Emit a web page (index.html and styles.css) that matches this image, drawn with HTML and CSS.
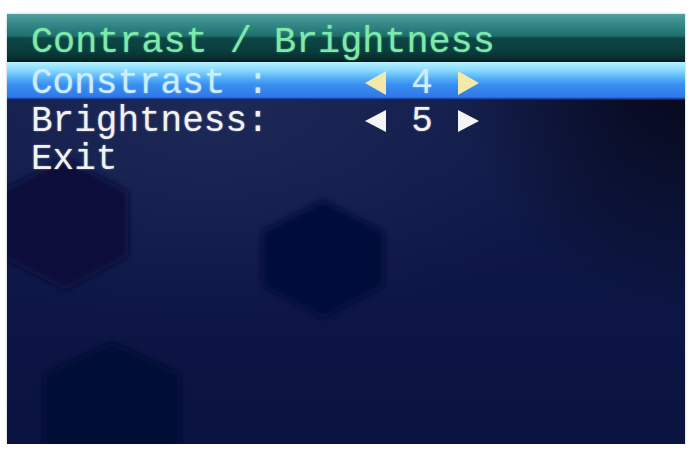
FILE: index.html
```html
<!DOCTYPE html>
<html>
<head>
<meta charset="utf-8">
<link rel="stylesheet" href="styles.css">
</head>
<body>
<div class="screen">
  <svg class="hexes" width="678" height="430" viewBox="0 0 678 430">
    <defs>
      <filter id="soft" x="-20%" y="-20%" width="140%" height="140%">
        <feGaussianBlur stdDeviation="3"/>
      </filter>
    </defs>
    <g filter="url(#soft)" stroke-linejoin="round" stroke-width="14">
      <polygon points="58,152 114,182 114,238 58,268 0,238 0,182" fill="#08113a" stroke="#08113a"/>
      <polygon points="316,194 370,222 370,268 316,296 262,268 262,222" fill="#060e3a" stroke="#060e3a"/>
      <polygon points="105,336 166,364 166,430 44,430 44,364" fill="#040a36" stroke="#040a36"/>
    </g>
  </svg>
  <div class="title">Contrast / Brightness</div>
  <div class="row selected">
    <span class="label">Constrast :</span>
    <svg class="arrow" width="22" height="24" viewBox="0 0 22 24"><polygon points="21,0 21,24 0,12" fill="#f3e9a8"/></svg>
    <span class="value">4</span>
    <svg class="arrow" width="22" height="24" viewBox="0 0 22 24"><polygon points="1,0 1,24 22,12" fill="#f3e9a8"/></svg>
  </div>
  <div class="row">
    <span class="label">Brightness:</span>
    <svg class="arrow" width="22" height="24" viewBox="0 0 22 24"><polygon points="21,1 21,23 0,12" fill="#f4f4f4"/></svg>
    <span class="value">5</span>
    <svg class="arrow" width="22" height="24" viewBox="0 0 22 24"><polygon points="1,1 1,23 22,12" fill="#f4f4f4"/></svg>
  </div>
  <div class="row">
    <span class="label">Exit</span>
  </div>
</div>
</body>
</html>
```
FILE: styles.css
```css
html, body {
  margin: 0;
  padding: 0;
  background: #ffffff;
}
body {
  padding: 14px 0 0 7px;
  font-family: "Liberation Mono", "DejaVu Sans Mono", monospace;
}
.screen {
  position: relative;
  width: 678px;
  height: 430px;
  overflow: hidden;
  background:
    radial-gradient(ellipse 230px 260px at 100% 8%, rgba(4,5,18,0.95) 0%, rgba(4,5,18,0) 100%),
    radial-gradient(ellipse 420px 220px at 30% 22%, rgba(30,42,88,0.9) 0%, rgba(30,42,88,0) 100%),
    linear-gradient(to bottom, #121c4c 0%, #0e1846 45%, #0a1240 100%);
  box-shadow: 0 0 2px rgba(120,130,170,0.6);
}
.hexes {
  position: absolute;
  left: 0;
  top: 0;
}
.title {
  position: relative;
  height: 48px;
  box-sizing: border-box;
  padding: 9px 0 0 24px;
  line-height: 38px;
  font-size: 36.8px;
  color: #7fe9ab;
  white-space: pre;
  text-shadow: 0 0 2px rgba(110,230,160,0.6);
  background: linear-gradient(to bottom, #4f9f9d 0%, #338786 22%, #1e6e6d 46%, #0d4746 50%, #0a3b3b 80%, #072c2c 94%, #031515 100%);
}
.row {
  position: relative;
  display: flex;
  align-items: flex-start;
  height: 38px;
  box-sizing: border-box;
  padding: 3px 0 0 24px;
  line-height: 38px;
  font-size: 36px;
  color: #f2f2f2;
  white-space: pre;
  text-shadow: 0 0 2px rgba(255,255,255,0.45);
}
.row.selected {
  color: #cdeeff;
  text-shadow: 0 0 2px rgba(200,235,255,0.6);
  background: linear-gradient(to bottom, #b6f2ff 0%, #8ddcff 20%, #55b2f8 42%, #3a8ef0 60%, #2f78ea 92%, #1c3c9c 97%, #0a1450 100%);
}
.label {
  width: 334px;
  flex: none;
}
.arrow {
  flex: none;
  margin-top: 6px;
}
.row.selected .arrow {
  filter: blur(0.6px);
}
.value {
  width: 70px;
  flex: none;
  text-align: center;
}
```
